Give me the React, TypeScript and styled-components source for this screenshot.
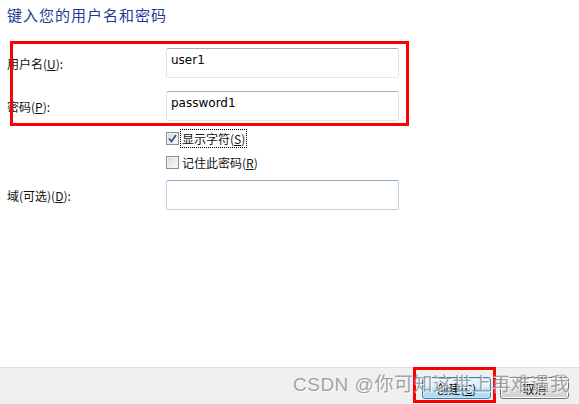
import React from 'react'
import styled, { createGlobalStyle } from 'styled-components'

const GlobalStyle = createGlobalStyle`
  html, body {
    margin: 0;
    padding: 0;
    background: #fff;
  }
  body {
    font-family: 'Noto Sans CJK SC', 'DejaVu Sans', sans-serif;
    font-size: 12px;
    color: #000;
  }
`

const cjk = `'Microsoft YaHei', 'Noto Sans CJK SC', 'DejaVu Sans', sans-serif`

const Page = styled.div`
  position: relative;
  width: 579px;
  height: 404px;
  display: flex;
  flex-direction: column;
  overflow: hidden;
`

const Content = styled.div`
  flex: 1;
  padding: 5px 0 0 7px;
`

const Title = styled.h1`
  margin: 0;
  font-family: ${cjk};
  font-size: 15px;
  font-weight: 400;
  letter-spacing: 1px;
  line-height: 20px;
  color: #1f3a93;
`

const Form = styled.div`
  display: flex;
  flex-direction: column;
  margin-top: 3px;
`

const Row = styled.div<{ $top: number; $h: number }>`
  display: flex;
  align-items: center;
  margin-top: ${(p) => p.$top}px;
  height: ${(p) => p.$h}px;
`

const Label = styled.label`
  width: 159px;
  flex: none;
  font-family: ${cjk};
  font-size: 12px;
  color: #111;
`

const Key = styled.span`
  text-decoration: underline;
`

const Input = styled.div`
  box-sizing: border-box;
  width: 233px;
  height: 30px;
  border: 1px solid #e2e3ea;
  border-top-color: #abadb3;
  border-bottom-color: #e3e9ef;
  border-radius: 2px;
  background: #fff;
  padding: 3px 0 0 4px;
  font-family: 'DejaVu Sans', sans-serif;
  font-size: 12px;
  line-height: 16px;
  color: #000;
  align-self: flex-start;
`

const DomainInput = styled(Input)`
  border-color: #b7d0e4;
  border-top-color: #8fa9c4;
`

const CheckLine = styled.div`
  display: flex;
  align-items: center;
`

const Box = styled.span`
  box-sizing: border-box;
  width: 13px;
  height: 13px;
  border: 1px solid #8f8f8f;
  background: linear-gradient(135deg, #d8d8d8 0%, #f4f4f4 70%, #ffffff 100%);
  box-shadow: inset 0 0 0 1px #f2f2f2;
  display: flex;
  align-items: center;
  justify-content: center;
`

const CheckText = styled.span<{ $focus?: boolean }>`
  margin-left: 2px;
  padding: 1px 1px;
  font-family: ${cjk};
  font-size: 12px;
  line-height: 15px;
  color: #111;
  outline: ${(p) => (p.$focus ? '1px dotted #000' : 'none')};
`

const Footer = styled.div`
  flex: none;
  height: 37px;
  box-sizing: border-box;
  border-top: 1px solid #dcdcdc;
  background: #f0f0f0;
  display: flex;
  justify-content: flex-end;
  align-items: flex-start;
  gap: 9px;
  padding: 9px 10px 0 0;
`

const Button = styled.button<{ $primary?: boolean }>`
  width: 69px;
  height: 22px;
  padding: 0;
  border-radius: 3px;
  font-family: ${cjk};
  font-size: 12px;
  color: #000;
  border: 1px solid ${(p) => (p.$primary ? '#3c7fb1' : '#707070')};
  background: ${(p) =>
    p.$primary
      ? 'linear-gradient(#eaf6fd 0%, #d9f0fc 45%, #bee6fd 50%, #a7d9f5 100%)'
      : 'linear-gradient(#f2f2f2 0%, #ebebeb 45%, #dddddd 50%, #cfcfcf 100%)'};
  box-shadow: inset 0 0 0 1px ${(p) => (p.$primary ? '#c6e7f9' : '#fbfbfb')};
`

const Annotation = styled.div<{ $x: number; $y: number; $w: number; $h: number }>`
  position: absolute;
  left: ${(p) => p.$x}px;
  top: ${(p) => p.$y}px;
  width: ${(p) => p.$w}px;
  height: ${(p) => p.$h}px;
  box-sizing: border-box;
  border: 3px solid #ff0000;
  pointer-events: none;
`

const Watermark = styled.div`
  position: absolute;
  left: 293px;
  top: 373px;
  font-family: 'Liberation Sans', 'Noto Sans CJK SC', sans-serif;
  font-size: 19px;
  letter-spacing: 0.5px;
  line-height: 24px;
  color: rgba(140, 140, 140, 0.8);
  text-shadow: 1px 1px 0 rgba(255, 255, 255, 0.8);
  white-space: nowrap;
  pointer-events: none;
`

const Check = () => (
  <svg width="9" height="9" viewBox="0 0 9 9">
    <path d="M1 4.5 L3.5 7.5 L8 1" fill="none" stroke="#3a5194" strokeWidth="1.8" />
  </svg>
)

export default function App() {
  return (
    <Page>
      <GlobalStyle />
      <Content>
        <Title>键入您的用户名和密码</Title>
        <Form>
          <Row $top={20} $h={30}>
            <Label>
              用户名(<Key>U</Key>):
            </Label>
            <Input>user1</Input>
          </Row>
          <Row $top={13} $h={30}>
            <Label>
              密码(<Key>P</Key>):
            </Label>
            <Input>password1</Input>
          </Row>
          <Row $top={8} $h={19}>
            <Label />
            <CheckLine>
              <Box>
                <Check />
              </Box>
              <CheckText $focus>
                显示字符(<Key>S</Key>)
              </CheckText>
            </CheckLine>
          </Row>
          <Row $top={5} $h={19}>
            <Label />
            <CheckLine>
              <Box />
              <CheckText>
                记住此密码(<Key>R</Key>)
              </CheckText>
            </CheckLine>
          </Row>
          <Row $top={8} $h={30}>
            <Label>
              域(可选)(<Key>D</Key>):
            </Label>
            <DomainInput />
          </Row>
        </Form>
      </Content>
      <Footer>
        <Button $primary>
          创建(<Key>C</Key>)
        </Button>
        <Button>取消</Button>
      </Footer>
      <Annotation $x={10} $y={41} $w={399} $h={85} />
      <Annotation $x={413} $y={367} $w={83} $h={36} />
      <Watermark>CSDN @你可知这世上再难遇我</Watermark>
    </Page>
  )
}
